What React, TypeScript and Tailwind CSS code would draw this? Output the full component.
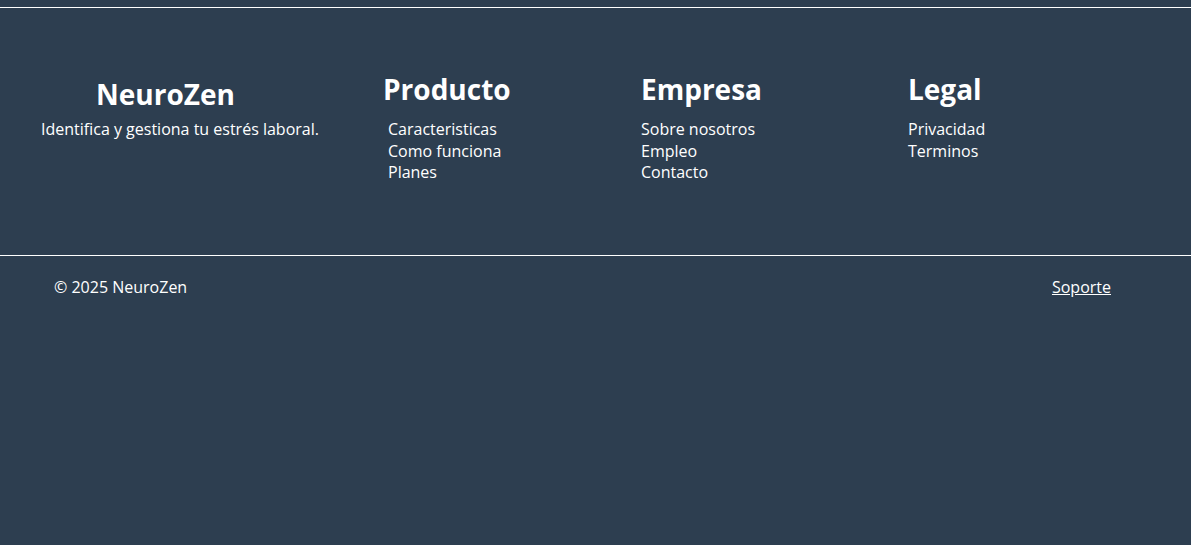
import React from 'react'

const columns = [
  { title: 'Producto', links: ['Caracteristicas', 'Como funciona', 'Planes'], indent: true, w: 'w-[258px]' },
  { title: 'Empresa', links: ['Sobre nosotros', 'Empleo', 'Contacto'], indent: false, w: 'w-[267px]' },
  { title: 'Legal', links: ['Privacidad', 'Terminos'], indent: false, w: 'w-[200px]' },
]

export default function App() {
  return (
    <div className="w-full h-[545px] bg-[#2d3e50] text-white font-['Open_Sans',sans-serif] pt-[7px]">
      <footer className="border-t border-white">
        {/* Columns */}
        <div className="flex pl-[41px] pt-[64px] h-[247px]">
          <div className="w-[342px]">
            <h2 className="pl-[55px] pt-[5px] text-[28px] font-bold leading-[34px]">NeuroZen</h2>
            <p className="mt-[7px] text-[16px] leading-[22px]">Identifica y gestiona tu estrés laboral.</p>
          </div>
          {columns.map((c) => (
            <div key={c.title} className={c.w}>
              <h3 className="text-[28px] font-bold leading-[34px]">{c.title}</h3>
              <ul className={`mt-[13px] text-[16px] leading-[21.5px] ${c.indent ? 'pl-[5px]' : ''}`}>
                {c.links.map((l) => (
                  <li key={l}>
                    <a href="#">{l}</a>
                  </li>
                ))}
              </ul>
            </div>
          ))}
        </div>

        {/* Bottom bar */}
        <div className="border-t border-white flex justify-between items-center pl-[54px] pr-[80px] pt-[20px] text-[16px] leading-[22px]">
          <span>© 2025 NeuroZen</span>
          <a href="#" className="underline">Soporte</a>
        </div>
      </footer>
    </div>
  )
}
